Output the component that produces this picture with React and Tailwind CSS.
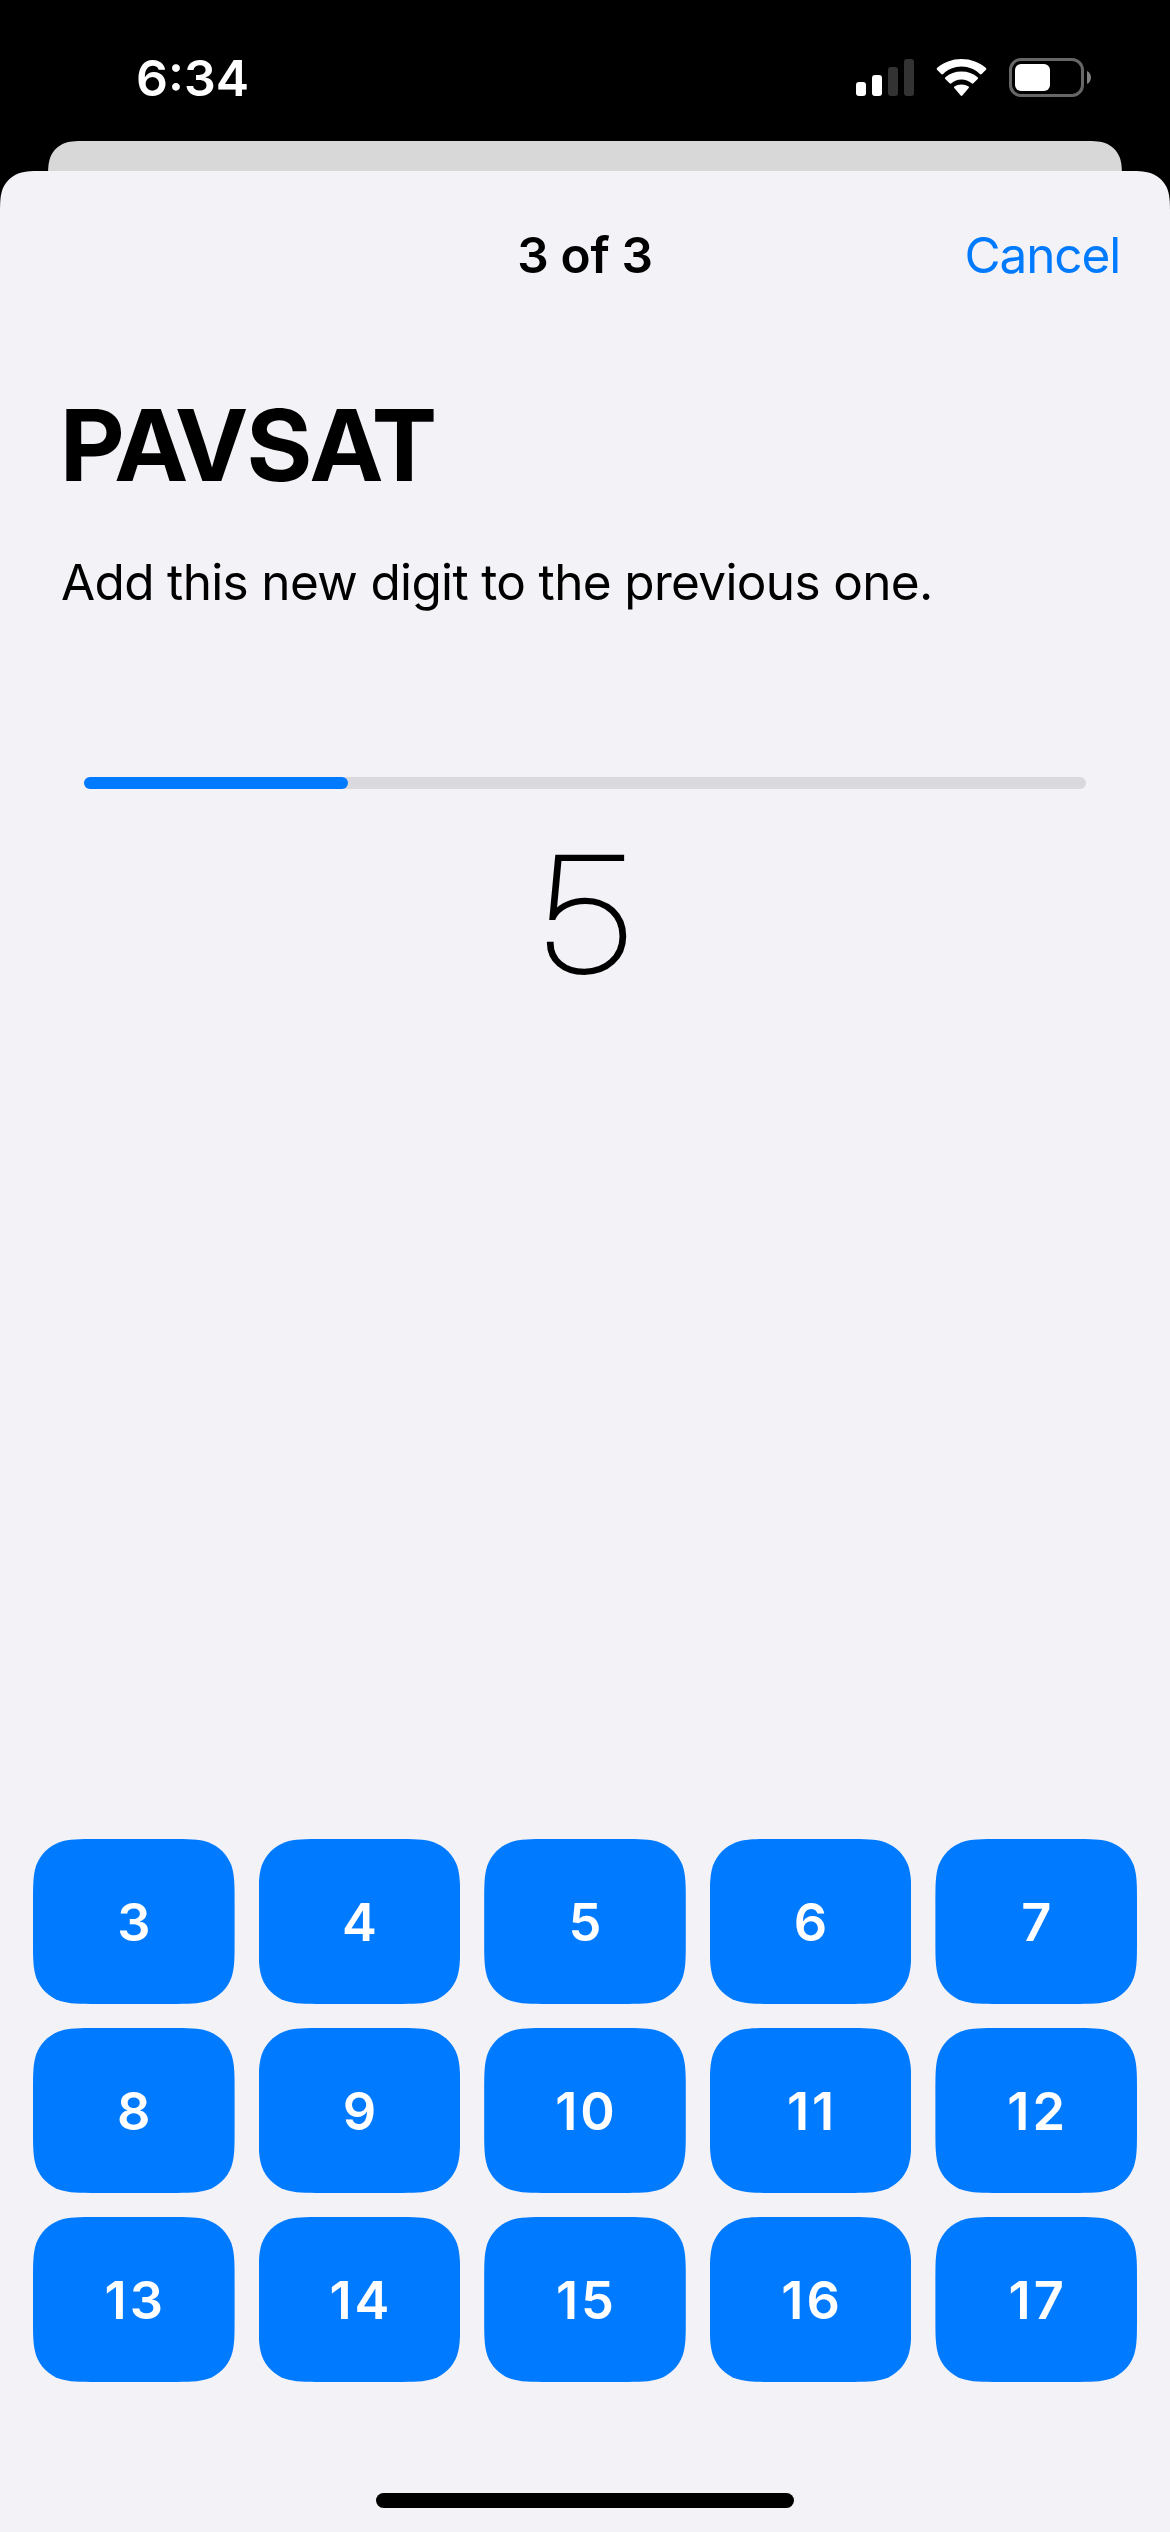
const KEYS = [3, 4, 5, 6, 7, 8, 9, 10, 11, 12, 13, 14, 15, 16, 17];

// Continuous-curvature rounded rectangle, as used for iOS surfaces.
function smoothRect(w, h, r, bottom = true) {
  const [a, b, c, d, e, f, g] = [1.528665, 1.088493, 0.868407, 0.631494, 0.372824, 0.16906, 0.074911].map((k) => k * r);
  const top =
    `M${a} 0L${w - a} 0C${w - b} 0 ${w - c} 0 ${w - d} ${g}C${w - e} ${f} ${w - f} ${e} ${w - g} ${d}C${w} ${c} ${w} ${b} ${w} ${a}`;
  const base = bottom
    ? `L${w} ${h - a}C${w} ${h - b} ${w} ${h - c} ${w - g} ${h - d}C${w - f} ${h - e} ${w - e} ${h - f} ${w - d} ${h - g}C${w - c} ${h} ${w - b} ${h} ${w - a} ${h}` +
      `L${a} ${h}C${b} ${h} ${c} ${h} ${d} ${h - g}C${e} ${h - f} ${f} ${h - e} ${g} ${h - d}C0 ${h - c} 0 ${h - b} 0 ${h - a}`
    : `L${w} ${h}L0 ${h}`;
  const close = `L0 ${a}C0 ${b} 0 ${c} ${g} ${d}C${f} ${e} ${e} ${f} ${d} ${g}C${c} 0 ${b} 0 ${a} 0Z`;
  return { clipPath: `path("${top}${base}${close}")` };
}

function Signal() {
  return (
    <div className="flex h-[37px] items-end gap-1.5">
      <span className="h-3.5 w-2.5 rounded-[3px] bg-white" />
      <span className="h-[21px] w-2.5 rounded-[3px] bg-white" />
      <span className="h-[29px] w-2.5 rounded-[3px] bg-[#333333]" />
      <span className="h-[37px] w-2.5 rounded-[3px] bg-[#333333]" />
    </div>
  );
}

function Wifi() {
  return (
    <svg className="h-[38px] w-[51px]" viewBox="0 0 51 38" fill="white">
      <path d="M25.5 7.6C32.6 7.6 39.1 10.4 43.8 15Q44.8 15.9 45.7 15L50 10.7Q50.8 9.9 50 9.1C43.6 3.4 35 0 25.5 0S7.4 3.4 1 9.1Q.2 9.9 1 10.7L5.3 15Q6.2 15.9 7.2 15C11.9 10.4 18.4 7.6 25.5 7.6Z" />
      <path d="M25.5 20.4C29.4 20.4 32.9 21.8 35.6 24.3Q36.5 25.1 37.4 24.3L41.7 19.9Q42.5 19.1 41.6 18.2C37.4 14.6 31.7 12.6 25.5 12.6S13.6 14.6 9.4 18.2Q8.5 19.1 9.3 19.9L13.6 24.3Q14.5 25.1 15.4 24.3C18.1 21.8 21.6 20.4 25.5 20.4Z" />
      <path d="M32.7 29.1Q33.5 28.3 32.6 27.6C30.7 26.2 28.2 25.4 25.5 25.4S20.3 26.2 18.4 27.6Q17.5 28.3 18.3 29.1L24.7 36.5Q25.5 37.3 26.3 36.5Z" />
    </svg>
  );
}

function Battery() {
  return (
    <div className="flex items-center gap-[3px]">
      <div className="h-[39px] w-[75px] rounded-[12px] border-[3px] border-[#666666] p-[3px]">
        <div className="h-[27px] w-[35px] rounded-[6px] bg-white" />
      </div>
      <svg className="h-[13px] w-1" viewBox="0 0 4 13" fill="#808080">
        <path d="M0 0C2.4 1 4 3.6 4 6.5S2.4 12 0 13Z" />
      </svg>
    </div>
  );
}

export default function App() {
  return (
    <div className="flex h-[2532px] w-[1170px] flex-col overflow-hidden bg-black font-['Inter','Liberation_Sans',sans-serif] text-black">
      <div className="mt-[29px] mb-[15px] flex h-[97px] items-center pr-[79px] pl-[136px] text-white">
        <span className="text-[50px] leading-none font-semibold">6:34</span>
        <div className="ml-auto flex items-center gap-[22px]">
          <Signal />
          <Wifi />
          <Battery />
        </div>
      </div>

      <div className="mx-12 h-[30px] w-[1074px] shrink-0 bg-[#d8d8d8]" style={smoothRect(1074, 30, 27, false)} />

      <main className="flex flex-1 flex-col bg-[#f2f2f7]" style={smoothRect(1170, 2361, 30, false)}>
        <header className="grid h-[168px] grid-cols-[1fr_auto_1fr] items-center px-[50px] pt-[2px] text-[49.5px] leading-none">
          <span />
          <h2 className="font-semibold tracking-[-0.3px]">3 of 3</h2>
          <button className="justify-self-end tracking-[-1.15px] text-[#007aff]">Cancel</button>
        </header>

        <h1 className="mt-[46px] pl-[61px] font-['Inter_Display','Inter',sans-serif] text-[98.8px] leading-[120px] font-bold tracking-[0.9px]">
          PAVSAT
        </h1>
        <p className="mt-[47px] pl-[61px] text-[49.5px] leading-[60px] tracking-[-0.65px]">
          Add this new digit to the previous one.
        </p>

        <div className="mx-[84px] mt-[165px] h-3 rounded-full bg-[#dad9de]">
          <div className="h-3 w-[264px] rounded-full bg-[#007aff]" />
        </div>

        <div className="mt-[25px] scale-x-[1.07] pl-[3px] text-center font-['Inter_Display','Inter',sans-serif] text-[160px] leading-[200px] font-thin [-webkit-text-stroke:2.7px_black]">
          5
        </div>

        <div className="mx-[33px] mt-auto grid auto-rows-[165px] grid-cols-5 gap-6">
          {KEYS.map((k) => (
            <button
              key={k}
              className={
                k > 9
                  ? "bg-[#007aff] pt-px pl-[3px] text-[52.3px] leading-none font-semibold tracking-[3px] text-white"
                  : "bg-[#007aff] pt-px text-[52.3px] leading-none font-semibold text-white"
              }
              style={smoothRect(201.6, 165, 42)}
            >
              {k}
            </button>
          ))}
        </div>

        <div className="mt-[111px] mb-6 h-[15px] w-[418px] self-center rounded-full bg-black" />
      </main>
    </div>
  );
}
